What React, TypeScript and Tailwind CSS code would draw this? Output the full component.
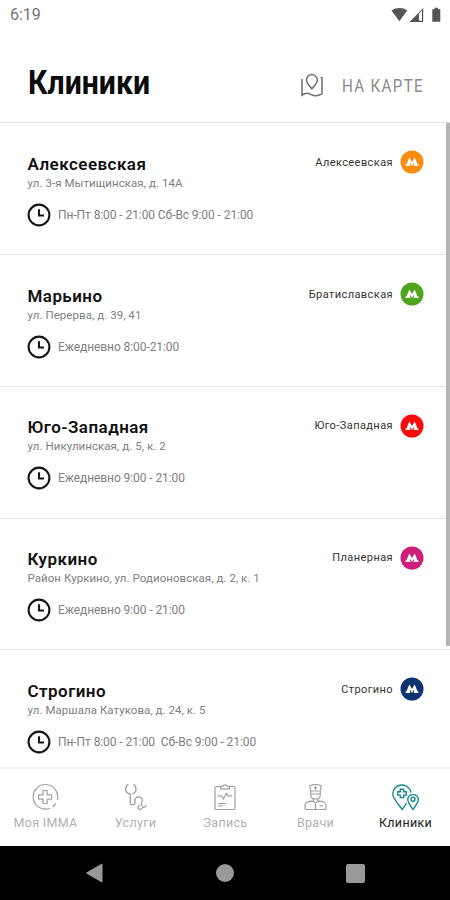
import React, { ReactElement } from 'react';

interface Clinic {
  name: string;
  address: string;
  hours: string;
  metro: string;
  badge: string;
}

const clinics: Clinic[] = [
  {
    name: 'Алексеевская',
    address: 'ул. 3-я Мытищинская, д. 14А',
    hours: 'Пн-Пт 8:00 - 21:00 Сб-Вс 9:00 - 21:00',
    metro: 'Алексеевская',
    badge: 'text-[#fb8c12]',
  },
  {
    name: 'Марьино',
    address: 'ул. Перерва, д. 39, 41',
    hours: 'Ежедневно 8:00-21:00',
    metro: 'Братиславская',
    badge: 'text-[#4fa51d]',
  },
  {
    name: 'Юго-Западная',
    address: 'ул. Никулинская, д. 5, к. 2',
    hours: 'Ежедневно 9:00 - 21:00',
    metro: 'Юго-Западная',
    badge: 'text-[#fb0d0d]',
  },
  {
    name: 'Куркино',
    address: 'Район Куркино, ул. Родионовская, д. 2, к. 1',
    hours: 'Ежедневно 9:00 - 21:00',
    metro: 'Планерная',
    badge: 'text-[#cf1f7d]',
  },
  {
    name: 'Строгино',
    address: 'ул. Маршала Катукова, д. 24, к. 5',
    hours: 'Пн-Пт 8:00 - 21:00  Сб-Вс 9:00 - 21:00',
    metro: 'Строгино',
    badge: 'text-[#0f3472]',
  },
];

function StatusBar(): ReactElement {
  return (
    <div className="flex h-[30px] shrink-0 items-center justify-between pl-[10px] pr-[8px]">
      <span className="text-[16px] leading-[30px] text-[#757575]">6:19</span>
      <svg width="52" height="18" viewBox="0 0 52 18" className="text-[#555]" fill="currentColor">
        <path d="M1.5 4.5C6 1.2 13 1.2 17.2 4.5L9.4 15.3z" />
        <path d="M33.2 2V16H19.5z M29 7.5v7.300h3V4.600z" fillRule="evenodd" />
        <path d="M44.5 1.7h3.600v1.500h2.200v12.600h-8V3.200h2.200z" />
      </svg>
    </div>
  );
}

function Header(): ReactElement {
  return (
    <header className="flex h-[93.4px] shrink-0 items-center justify-between border-b border-[#e2e2e2] pr-[26px] pl-[28px]">
      <h1 className="mt-[13px] w-[122px] origin-left scale-x-[0.915] text-[33px] leading-10 font-bold whitespace-nowrap text-[#0c0c0c]">
        Клиники
      </h1>
      <div className="mt-[18px] flex items-center text-[#8a8a8a]">
        <svg width="24" height="24" viewBox="0 0 24 24" fill="none" stroke="#707070" strokeWidth="1.5">
          <path d="M2 6v16.2c3-2.2 6-2.5 9-.6 3.500 1.700 7 1.600 11-.8V4.800h-1.500" />
          <path d="M11.900 15.800C9.600 12.800 6.500 10.300 6.500 7a5.400 5.400 0 0 1 10.800 0c0 3.300-3.100 5.800-5.400 8.800z" />
        </svg>
        <div className="mt-[3px] ml-[18px] w-[82px]">
          <span className="inline-block origin-left scale-x-[0.84] text-[18px] leading-6 tracking-[1.6px] whitespace-nowrap">
            НА КАРТЕ
          </span>
        </div>
      </div>
    </header>
  );
}

function ClinicRow({ clinic }: { clinic: Clinic }): ReactElement {
  return (
    <li className="flex h-[131.75px] shrink-0 items-start justify-between border-b border-[#e6e6e6] pt-[29.6px] pr-[26px] pl-[27.5px]">
      <div className="whitespace-pre">
        <h2 className="text-[17px] leading-[22px] font-semibold tracking-[0.45px] text-[#111]">{clinic.name}</h2>
        <p className="text-[11.5px] leading-[17px] tracking-[0.05px] text-[#808080]">{clinic.address}</p>
        <div className="mt-[11px] -ml-[0.5px] flex items-center">
          <svg width="24" height="24" viewBox="0 0 24 24" fill="none" stroke="#161616" strokeWidth="2.1">
            <circle cx="12" cy="12" r="10.4" />
            <path d="M12 6.3v6.200h5" />
          </svg>
          <span className="ml-[7px] text-[12px] leading-6 tracking-[-0.08px] text-[#808080]">{clinic.hours}</span>
        </div>
      </div>
      <div className="-mt-[3px] flex items-center">
        <span className="mt-px text-[11px] leading-6 tracking-[0.42px] text-[#333]">{clinic.metro}</span>
        <svg width="24" height="24" viewBox="0 0 24 24" className={`ml-[7px] ${clinic.badge}`}>
          <circle cx="12" cy="12" r="11.5" fill="currentColor" />
          <path
            d="M5.500 16v-1.400h.9L9.300 7.600 12 12l2.700-4.400 2.900 7h.9V16h-4.700v-1.400h.6l-.7-1.500L12 16l-1.700-2.900-.7 1.500h.6V16z"
            fill="#fff"
          />
        </svg>
      </div>
    </li>
  );
}

function PlusIcon(): ReactElement {
  return (
    <svg width="28" height="28" viewBox="0 0 28 28" fill="none" stroke="currentColor" strokeWidth="1.2">
      <path d="M19 25.200A12.300 12.300 0 1 1 26.300 17M25 20.500l-3.200 3.500" />
      <path d="M12 7.500h4.200v4.400h4.400v4.200h-4.400v4.400H12v-4.400H7.600v-4.200H12z" strokeLinejoin="round" />
    </svg>
  );
}

function StethoscopeIcon(): ReactElement {
  return (
    <svg width="28" height="28" viewBox="0 0 28 28" fill="none" stroke="currentColor" strokeWidth="1.3">
      <path d="M7.500 1.800H6C4.500 4 4.300 6 5 8c.7 1.800 2.300 2.800 4.300 3v8.500c0 3 4.700 3 4.700.3 0-3-.5-5.800 3.500-5.800s4.200 3 3.200 5.200c-.8 2-.3 3.500 1.300 3.800" />
      <path d="M12 1.800h1.500C15 4 15.500 6 14.800 8c-.6 1.600-1.800 2.600-3.400 3" />
      <path d="M18.500 22.500c-2 .5-2.300 3.500.2 3.800 2 .2 2-1.800 3.800-2 1.500-.2 2.500-.5 2.500-2" />
    </svg>
  );
}

function ClipboardIcon(): ReactElement {
  return (
    <svg width="28" height="28" viewBox="0 0 28 28" fill="none" stroke="currentColor" strokeWidth="1.2">
      <path d="M9.500 3.500H5.500a1.500 1.500 0 0 0-1.500 1.500v20a1.500 1.500 0 0 0 1.500 1.500h17a1.500 1.500 0 0 0 1.500-1.500V5a1.500 1.500 0 0 0-1.500-1.500h-4" />
      <path d="M9.500 5.800V3.300h2.300c.5-2 3.900-2 4.400 0h2.300v2.500zM6.500 12.800h4l2 3 2.800-5.500 2 2.500h4M7 20.500h8M7 23h5" />
    </svg>
  );
}

function DoctorIcon(): ReactElement {
  return (
    <svg width="28" height="28" viewBox="0 0 28 28" fill="none" stroke="currentColor" strokeWidth="1.2">
      <path d="M8.800 2.800c3-1.600 8.400-1.600 11.400 0l-.9 5.200H9.700zM9.700 8v4c.5 5.300 9.100 5.300 9.600 0V8M9.700 11h9.600M12.700 4.800h3.600M14.500 3.200v3.200M12.300 15.500V18M16.700 15.500V18" />
      <path d="M4 25v-2.500c0-3 3.500-4.300 7.500-4.300l3 1.500 3-1.500c4 0 7.500 1.300 7.500 4.300V25a1.500 1.500 0 0 1-1.500 1.500h-18A1.500 1.500 0 0 1 4 25zM14.500 19.700v6.800M18.500 22.800h3.500" />
    </svg>
  );
}

function PinsIcon(): ReactElement {
  return (
    <svg width="28" height="28" viewBox="0 0 28 28" fill="none" stroke="currentColor" strokeWidth="1.4">
      <path d="M15.500 20c-1.500 2.700-3.300 5-4.300 6.500C8 22 1.700 15.500 1.700 10.800a9.300 9.300 0 0 1 18.400-1.300" />
      <path d="M22 26.500c-2-3.200-5.300-6.700-5.300-10.200a5.400 5.400 0 0 1 10.700 0c0 3.500-3.400 7-5.400 10.200z" />
      <path d="M9.300 6.200h3.400v2.500h2.500v3.400h-2.500v2.500H9.300v-2.500H6.800V8.700h2.500z" />
      <circle cx="22" cy="16.200" r="2" />
    </svg>
  );
}

const tabs = [
  { label: 'Моя IMMA', icon: <PlusIcon /> },
  { label: 'Услуги', icon: <StethoscopeIcon /> },
  { label: 'Запись', icon: <ClipboardIcon /> },
  { label: 'Врачи', icon: <DoctorIcon /> },
  { label: 'Клиники', icon: <PinsIcon />, active: true },
];

function TabBar(): ReactElement {
  return (
    <nav className="grid h-[79px] shrink-0 grid-cols-5 border-t-2 border-[#f0f0f0] bg-white">
      {tabs.map((tab) => (
        <a key={tab.label} href="#" className="flex flex-col items-center pt-[14px]">
          <span className={tab.active ? 'block h-7 text-[#168a8c]' : 'block h-7 text-[#a0a0a0]'}>{tab.icon}</span>
          <span
            className={`mt-[4px] pl-px text-[12.5px] leading-[16px] tracking-[0.3px] ${tab.active ? 'text-[#222]' : 'text-[#b0b0b0]'}`}
          >
            {tab.label}
          </span>
        </a>
      ))}
    </nav>
  );
}

function SystemNav(): ReactElement {
  return (
    <div className="grid h-[54px] shrink-0 grid-cols-3 items-center justify-items-center bg-black px-[30px]">
      <svg width="18" height="20" viewBox="0 0 18 20" className="-ml-[2px] fill-[#999]">
        <path d="M1.500 10 17 1v18z" stroke="#999" strokeLinejoin="round" />
      </svg>
      <span className="h-[18px] w-[18px] rounded-full bg-[#999]" />
      <span className="h-[19px] w-[19px] rounded-[2px] bg-[#999]" />
    </div>
  );
}

export default function App(): ReactElement {
  return (
    <div className="flex h-[900px] w-[450px] flex-col overflow-hidden bg-white font-['Roboto','Liberation_Sans',sans-serif]">
      <StatusBar />
      <Header />
      <main className="relative min-h-0 flex-1 overflow-hidden">
        <ul className="flex flex-col">
          {clinics.map((clinic) => (
            <ClinicRow key={clinic.name} clinic={clinic} />
          ))}
        </ul>
        <span className="absolute top-0 right-0 h-[523px] w-[4px] bg-[#b5b5b5]" />
      </main>
      <TabBar />
      <SystemNav />
    </div>
  );
}
